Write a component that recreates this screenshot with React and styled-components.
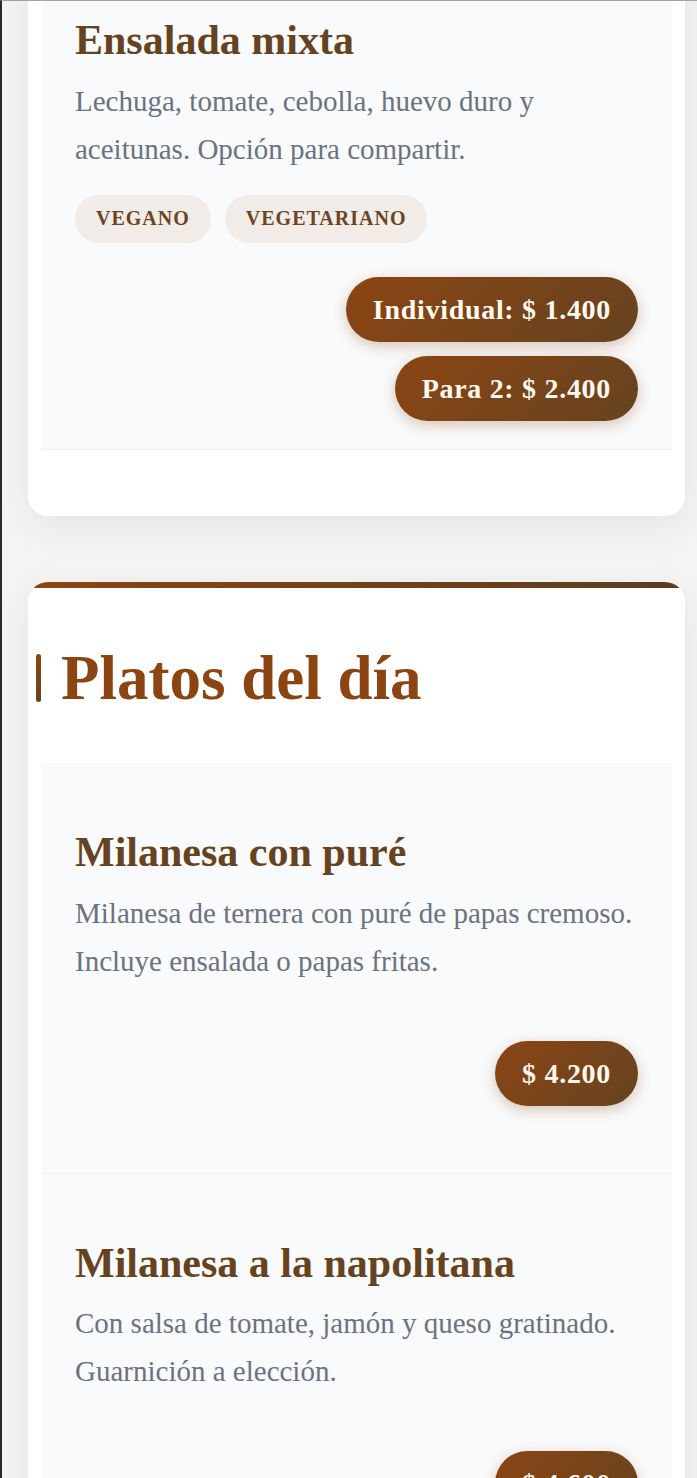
import { createGlobalStyle, styled } from "styled-components";

const GlobalStyle = createGlobalStyle`
body {
  margin: 0;
  background: #f4f4f4;
  font-family: "Liberation Serif", "Times New Roman", serif;
}
`

const sections = [
    {
        id: "ensaladas",
        title: null,
        items: [
            {
                name: "Ensalada mixta",
                description: "Lechuga, tomate, cebolla, huevo duro y aceitunas. Opción para compartir.",
                tags: ["Vegano", "Vegetariano"],
                prices: ["Individual: $ 1.400", "Para 2: $ 2.400"],
            },
        ],
    },
    {
        id: "platos",
        title: "Platos del día",
        items: [
            {
                name: "Milanesa con puré",
                description: "Milanesa de ternera con puré de papas cremoso. Incluye ensalada o papas fritas.",
                tags: [],
                prices: ["$ 4.200"],
            },
            {
                name: "Milanesa a la napolitana",
                description: "Con salsa de tomate, jamón y queso gratinado. Guarnición a elección.",
                tags: [],
                prices: ["$ 4.600"],
            },
        ],
    },
]

export default function App () {
    return (
        <>
            <GlobalStyle/>
            <Frame>
                <Stack>
                    {sections.map((section) => (
                        <Card key={section.id}>
                            {section.title && <TopBar/>}
                            {section.title && <SectionTitle>{section.title}</SectionTitle>}
                            {section.items.map((item, i) => (
                                <MenuItem key={item.name} item={item} $last={!section.title && i === section.items.length - 1}/>
                            ))}
                        </Card>
                    ))}
                </Stack>
            </Frame>
        </>
    );
}

function MenuItem ({item, $last}) {
    const { name, description, tags, prices } = item
    return (
        <Item $last={$last}>
            <ItemName>{name}</ItemName>
            <ItemDescription>{description}</ItemDescription>
            <Tags>
                {tags.map((tag) => <Tag key={tag}>{tag}</Tag>)}
            </Tags>
            <Prices>
                {prices.map((price) => <Price key={price}>{price}</Price>)}
            </Prices>
        </Item>
    );
}

const Frame = styled.div`
min-height: 100vh;
border-left: 2px solid #2a2a2a;
border-top: 1px solid #a3a3a3;
padding: 0 12px 0 26px;
overflow: hidden;
`
const Stack = styled.main`
display: flex;
flex-direction: column;
gap: 66px;
margin-top: -50px;
`
const Card = styled.section`
background-color: #fff;
border-radius: 20px;
overflow: hidden;
padding: 0 13px 66px;
box-shadow: 0 10px 40px rgba(0, 0, 0, 0.07);
`
const TopBar = styled.div`
height: 6px;
margin: 0 -13px;
background: linear-gradient(90deg, #8b4513, #5c3d1e);
`
const SectionTitle = styled.h2`
display: flex;
align-items: center;
gap: 20px;
margin: 53px 0 47px -5px;
font-size: 63px;
line-height: 1.2;
font-weight: 700;
color: #8b4513;

&::before {
  content: "";
  width: 5px;
  height: 48px;
  border-radius: 3px;
  background: linear-gradient(180deg, #8b4513, #654321);
}
`
const Item = styled.article`
background-color: #f9fafb;
padding: 62px 34px ${({$last}) => $last ? "28px" : "67px"};
border-bottom: 1px solid #f0f0f0;
`
const ItemName = styled.h3`
margin: 0 0 9px;
font-size: 42px;
line-height: 1.3;
font-weight: 700;
color: #654321;
`
const ItemDescription = styled.p`
margin: 0;
font-size: 29px;
line-height: 48px;
color: #6b7280;
`
const Tags = styled.ul`
display: flex;
flex-wrap: wrap;
gap: 14px;
margin: 22px 0 0;
padding: 0;
list-style: none;
`
const Tag = styled.li`
display: flex;
align-items: center;
height: 48px;
padding: 0 21px;
border-radius: 999px;
background-color: #f1ece7;
color: #6b4423;
font-size: 20px;
font-weight: 700;
letter-spacing: 1px;
text-transform: uppercase;
`
const Prices = styled.div`
display: flex;
flex-direction: column;
align-items: flex-end;
gap: 14px;
margin-top: 34px;
`
const Price = styled.span`
padding: 16px 27px;
border-radius: 999px;
background: linear-gradient(135deg, #8b4513, #654321);
color: #fff8ee;
font-size: 28px;
line-height: 33px;
font-weight: 700;
letter-spacing: 0.7px;
box-shadow: 0 4px 14px rgba(139, 69, 19, 0.3);
`
